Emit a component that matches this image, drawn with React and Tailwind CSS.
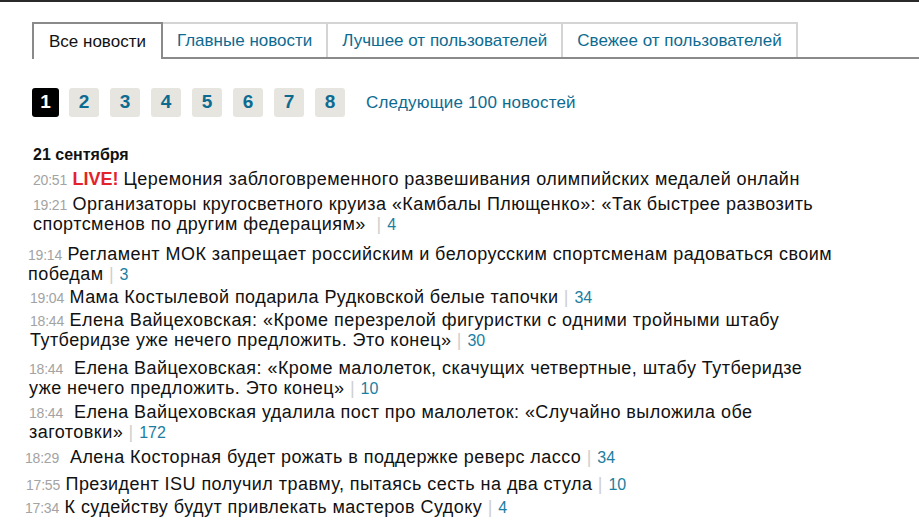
import React from 'react';

const tabs = [
    { name: "Все новости", active: true },
    { name: "Главные новости" },
    { name: "Лучшее от пользователей" },
    { name: "Свежее от пользователей" },
];

const pages = [1, 2, 3, 4, 5, 6, 7, 8];

// news rows; offsets per row follow the picture
const news = [
    { time: "20:51", live: true, lines: ["Церемония заблоговременного развешивания олимпийских медалей онлайн"], box: "mt-[6px] ml-[33px]" },
    { time: "19:21", lines: ["Организаторы кругосветного круиза «Камбалы Плющенко»: «Так быстрее развозить", "спортсменов по другим федерациям»"], count: 4, wide: true, box: "mt-[5px] ml-[33px]" },
    { time: "19:14", lines: ["Регламент МОК запрещает российским и белорусским спортсменам радоваться своим", "победам"], count: 3, box: "mt-[10px] ml-[28px]" },
    { time: "19:04", lines: ["Мама Костылевой подарила Рудковской белые тапочки"], count: 34, box: "mt-[3px] ml-[30px]" },
    { time: "18:44", lines: ["Елена Вайцеховская: «Кроме перезрелой фигуристки с одними тройными штабу", "Тутберидзе уже нечего предложить. Это конец»"], count: 30, box: "mt-[3px] ml-[30px]" },
    { time: "18:44", gap: true, lines: ["Елена Вайцеховская: «Кроме малолеток, скачущих четвертные, штабу Тутберидзе", "уже нечего предложить. Это конец»"], count: 10, box: "mt-[8px] ml-[29px] leading-[18px]" },
    { time: "18:44", gap: true, lines: ["Елена Вайцеховская удалила пост про малолеток: «Случайно выложила обе", "заготовки»"], count: 172, box: "mt-[4px] ml-[29px] leading-[19px]" },
    { time: "18:29", gap: true, lines: ["Алена Косторная будет рожать в поддержке реверс лассо"], count: 34, box: "mt-[5px] ml-[25px]" },
    { time: "17:55", lines: ["Президент ISU получил травму, пытаясь сесть на два стула"], count: 10, box: "mt-[7px] ml-[26px]" },
    { time: "17:34", lines: ["К судейству будут привлекать мастеров Судоку"], count: 4, box: "mt-0 ml-[25px] pt-[3px] relative bg-white" },
];

const App = () => {
    return (
        <div className="w-[919px] h-[531px] overflow-hidden bg-white font-['Liberation_Sans',Arial,sans-serif]">
            {/* Top rule */}
            <div className="h-[2px] bg-[#2a2a2a]" />

            {/* Tabs */}
            <div className="mt-[20px] flex items-end">
                <div className="w-[32px] shrink-0" />
                {tabs.map((tab) =>
                    tab.active ? (
                        <div
                            key={tab.name}
                            className="h-[37px] px-[15px] flex items-center border-2 border-b-0 border-[#8a8a8a] bg-white text-[17px] text-[#111]"
                        >
                            {tab.name}
                        </div>
                    ) : (
                        <div key={tab.name} className="flex flex-col">
                            <div className="h-[35px] px-[14px] flex items-center border-2 border-b-0 border-l-0 border-[#d4d4d4] text-[17px] text-[#0d6b91]">
                                {tab.name}
                            </div>
                            <div className="h-[2px] bg-[#8a8a8a]" />
                        </div>
                    )
                )}
                <div className="flex-1 h-[2px] bg-[#8a8a8a]" />
            </div>

            {/* Pagination */}
            <div className="mt-[29px] ml-[32px] flex items-center">
                {pages.map((p) => (
                    <div
                        key={p}
                        className={`h-[29px] flex items-center justify-center rounded-[3px] text-[19px] font-bold ${p === 1 ? 'w-[27px] bg-black text-white mr-[10px]' : 'w-[30px] mr-[11px] bg-[#e7e5df] text-[#0d6b91]'}`}
                    >
                        {p}
                    </div>
                ))}
                <span className="ml-[10px] text-[17px] text-[#0d6b91] tracking-[0.2px]">Следующие 100 новостей</span>
            </div>

            {/* News list */}
            <div className="mt-[30px] ml-[33px] text-[16px] leading-[16px] font-bold text-[#111]">21 сентября</div>
            {news.map((n, i) => (
                <div key={i} className={`w-fit pr-2 text-[18px] leading-[20px] text-[#111] tracking-[0.45px] whitespace-nowrap ${n.box}`}>
                    <span className="text-[14px] leading-none text-[#a3a3a3] tracking-[-0.2px]">{n.time}</span>
                    {n.gap ? '\u00a0 ' : ' '}
                    {n.live && <span className="font-bold text-[#e3222b] tracking-[0px]">LIVE! </span>}
                    {n.lines.map((line, j) => (
                        <React.Fragment key={j}>
                            {j > 0 && <br />}
                            {line}
                        </React.Fragment>
                    ))}
                    {n.count !== undefined && (
                        <>
                            <span className="text-[#cfcfcf]">{n.wide ? '\u00a0\u00a0| ' : '\u00a0| '}</span>
                            <span className="text-[16px] leading-none text-[#1b7ea0] tracking-[0px]">{n.count}</span>
                        </>
                    )}
                </div>
            ))}
        </div>
    );
};

export default App;
